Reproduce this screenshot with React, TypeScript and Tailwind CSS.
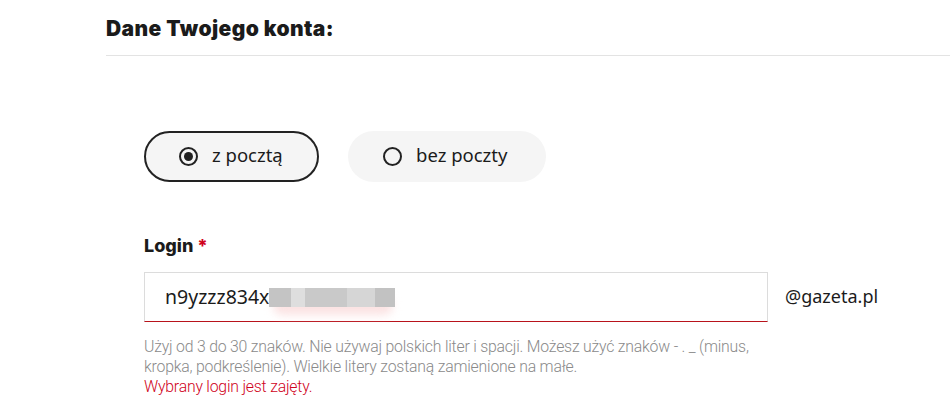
import React from 'react';

export default function App() {
  return (
    <div className="w-[950px] h-[414px] bg-white overflow-hidden text-[#1b1b1b]" style={{ fontFamily: '"Noto Sans", Inter, sans-serif' }}>
      {/* Header */}
      <div className="pl-[106px] pt-[16px]">
        <h2 className="text-[21px] font-black leading-[26px] tracking-[0.4px]" style={{ fontFamily: 'Inter, sans-serif' }}>Dane Twojego konta:</h2>
        <div className="mt-[13px] h-px bg-[#e3e3e3]" />
      </div>

      <div className="pl-[144px]">
        {/* Mailbox choice */}
        <div className="mt-[75px] flex items-center gap-[29px]">
          <button className="h-[51px] w-[175px] rounded-full border-2 border-[#222] bg-[#f5f5f5] flex items-center pl-[33px]">
            <span className="w-[19px] h-[19px] rounded-full border-2 border-[#222] flex items-center justify-center">
              <span className="w-[9px] h-[9px] rounded-full bg-[#222]" />
            </span>
            <span className="ml-[14px] text-[18.5px] leading-none pb-[2px]">z pocztą</span>
          </button>
          <button className="h-[51px] w-[198px] rounded-full bg-[#f5f5f5] flex items-center pl-[35px]">
            <span className="w-[19px] h-[19px] rounded-full border-2 border-[#222]" />
            <span className="ml-[14px] text-[18.5px] leading-none pb-[2px]">bez poczty</span>
          </button>
        </div>

        {/* Login */}
        <div className="mt-[52px] text-[18px] font-extrabold leading-[24px]" style={{ fontFamily: 'Inter, sans-serif' }}>
          Login <span className="text-[#d0021b]">*</span>
        </div>
        <div className="mt-[14px] flex items-center">
          <div className="w-[624px] h-[50px] border border-[#dcdcdc] border-b-[#b8131b] flex items-center pl-[20px] bg-white">
            <span className="text-[19.5px] leading-none pb-[1px]">n9yzzz834x</span>
            <span className="relative flex items-center h-[20px]">
              <span className="absolute left-[4px] top-[10px] w-[120px] h-[18px] rounded-full bg-[#fbe3e3] blur-[4px]" />
              <span className="relative w-[22px] h-[19px] bg-[#c4c4c4] blur-[0.5px]" />
              <span className="relative w-[14px] h-[19px] bg-[#dedede] blur-[0.5px]" />
              <span className="relative w-[42px] h-[19px] bg-[#c9c9c9] blur-[0.5px]" />
              <span className="relative w-[28px] h-[19px] bg-[#d6d6d6] blur-[0.5px]" />
              <span className="relative w-[20px] h-[19px] bg-[#c2c2c2] blur-[0.5px]" />
            </span>
          </div>
          <span className="ml-[17px] text-[18px] pb-[2px]">@gazeta.pl</span>
        </div>

        {/* Help */}
        <div className="mt-[15px] w-[640px] text-[15.8px] leading-[20px] text-[#8a8a8a] tracking-[-0.2px]" style={{ fontFamily: 'Roboto, sans-serif', fontWeight: 300 }}>
          Użyj od 3 do 30 znaków. Nie używaj polskich liter i spacji. Możesz użyć znaków - . _ (minus, kropka, podkreślenie). Wielkie litery zostaną zamienione na małe.
          <div className="text-[#d0021b]">Wybrany login jest zajęty.</div>
        </div>
      </div>
    </div>
  );
}
